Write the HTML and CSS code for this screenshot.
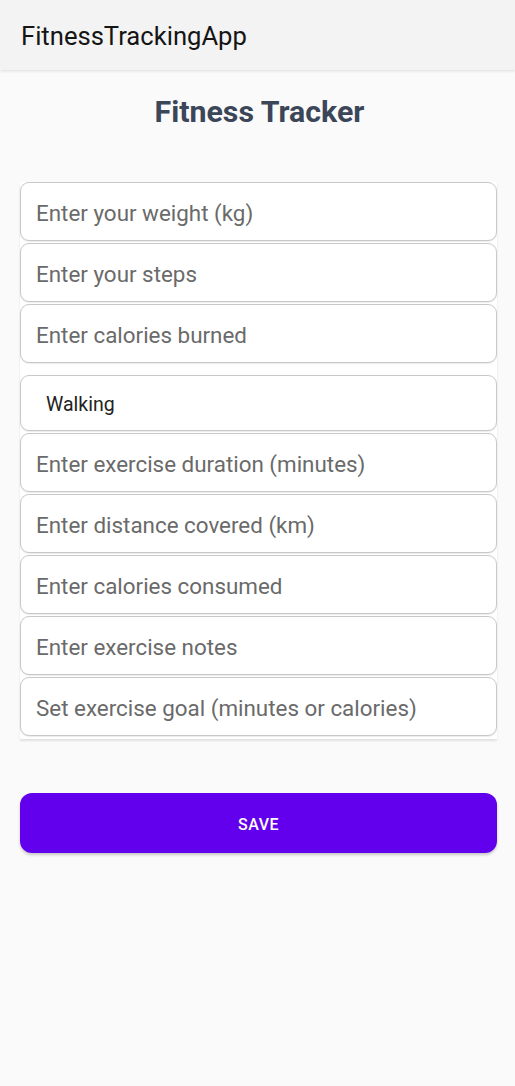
FILE: index.html
```html
<!DOCTYPE html>
<html>
<head>
<meta charset="utf-8">
<link rel="stylesheet" href="styles.css">
</head>
<body>
<header class="appbar"><span class="appbar-title">FitnessTrackingApp</span></header>
<main class="content">
  <h1 class="heading">Fitness Tracker</h1>
  <section class="form">
    <div class="field">Enter your weight (kg)</div>
    <div class="field">Enter your steps</div>
    <div class="field">Enter calories burned</div>
    <div class="field spinner">Walking</div>
    <div class="field">Enter exercise duration (minutes)</div>
    <div class="field">Enter distance covered (km)</div>
    <div class="field">Enter calories consumed</div>
    <div class="field">Enter exercise notes</div>
    <div class="field">Set exercise goal (minutes or calories)</div>
  </section>
  <button class="save">SAVE</button>
</main>
</body>
</html>
```
FILE: styles.css
```css
* { box-sizing: border-box; }
html, body { margin: 0; padding: 0; }
body {
  width: 515px;
  height: 1086px;
  background: #fafafa;
  font-family: Roboto, "Noto Sans", sans-serif;
  overflow: hidden;
}
.appbar {
  height: 70px;
  background: #f3f3f3;
  display: flex;
  align-items: center;
  padding-left: 21px;
  box-shadow: 0 1px 3px rgba(0,0,0,0.12);
  position: relative;
}
.appbar-title {
  font-size: 25.6px;
  color: #151515;
  margin-top: 2px;
}
.content {
  padding: 0 18px 0 20px;
  display: flex;
  flex-direction: column;
}
.heading {
  margin: 22px 0 0;
  height: 40px;
  text-align: center;
  font-size: 30.3px;
  font-weight: bold;
  color: #3b4658;
  line-height: 40px;
  padding-left: 2px;
}
.form {
  margin-top: 50px;
  background: #ffffff;
  display: flex;
  flex-direction: column;
  gap: 2px;
  padding-bottom: 3px;
  box-shadow: 0 2px 2px rgba(0,0,0,0.10);
}
.field {
  height: 59px;
  border: 1.5px solid #c9c9c9;
  border-radius: 9px;
  background: #fff;
  display: flex;
  align-items: center;
  padding-left: 15px;
  padding-top: 2px;
  font-size: 22.4px;
  color: #6a6a6a;
  box-shadow: 0 1px 1px rgba(0,0,0,0.08);
}
.field.spinner {
  margin-top: 10px;
  height: 56px;
  padding-left: 25px;
  font-size: 19.5px;
  color: #222;
}
.save {
  margin-top: 54px;
  height: 60px;
  width: 477px;
  margin-left: 0;
  border: none;
  border-radius: 12px;
  background: #6200ee;
  color: #fff;
  font-family: Roboto, "Noto Sans", sans-serif;
  font-weight: 500;
  font-size: 16px;
  letter-spacing: 0.5px;
  padding-top: 4px;
  box-shadow: 0 2px 3px rgba(0,0,0,0.2);
}
```
